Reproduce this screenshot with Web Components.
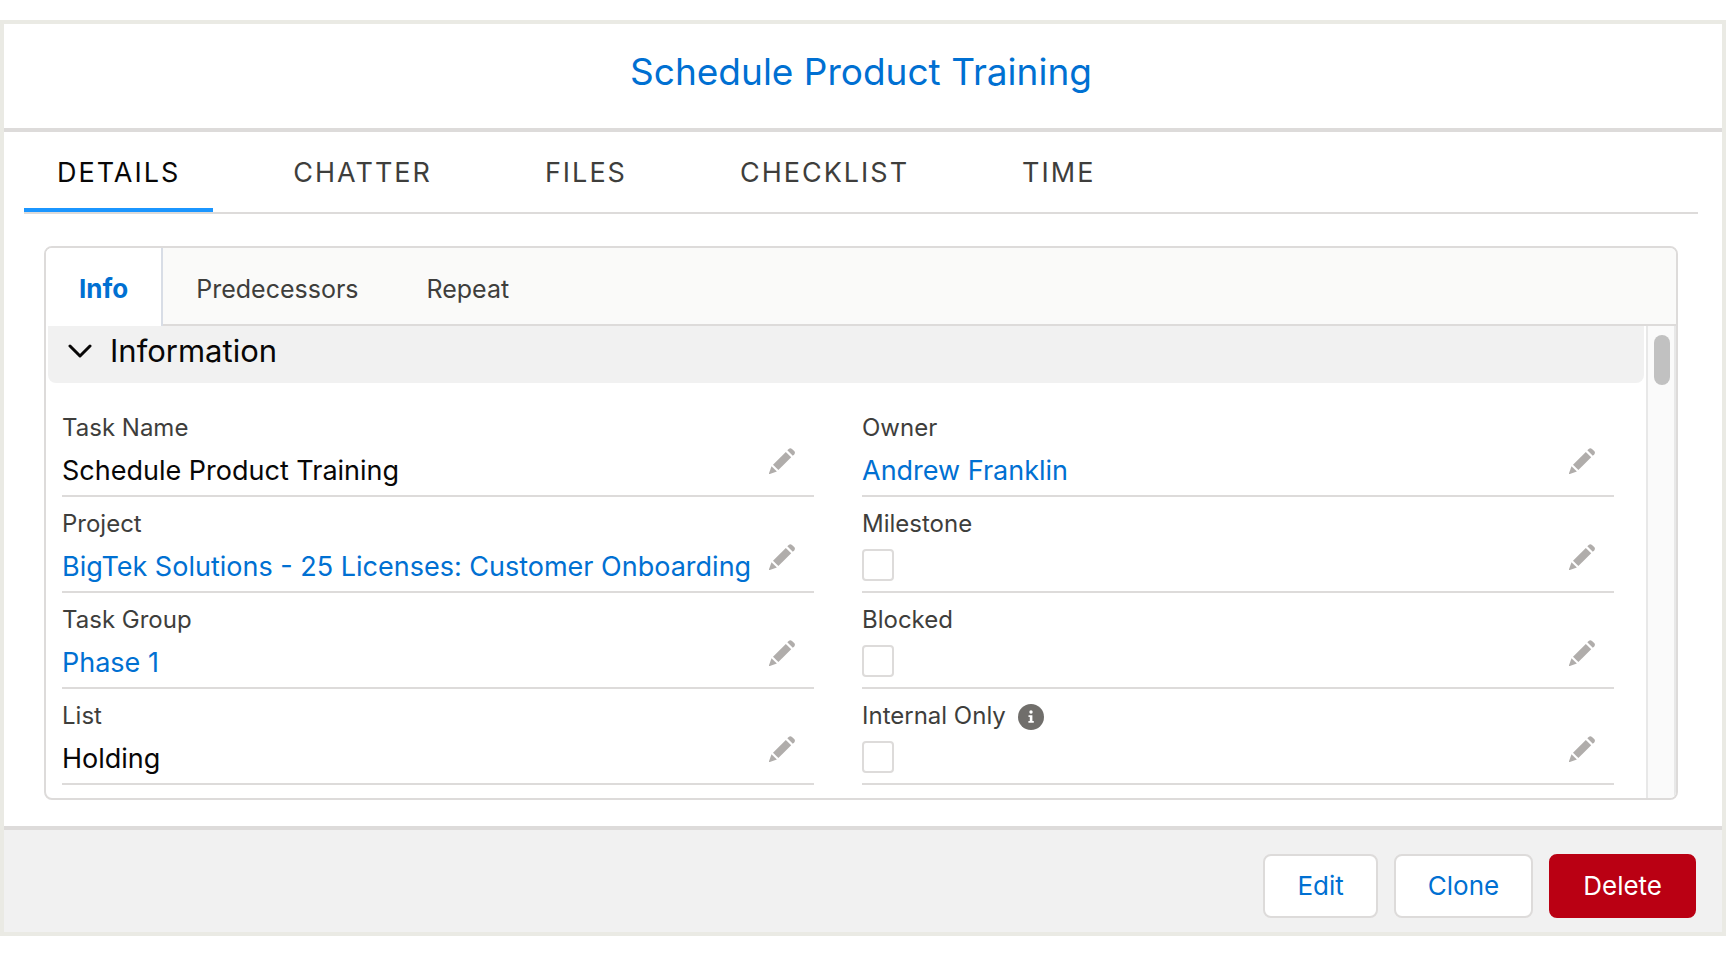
<!DOCTYPE html>
<html lang="en">
<head>
<meta charset="UTF-8">
<meta name="viewport" content="width=device-width, initial-scale=1.0">
<title>Schedule Product Training</title>
<style>
  :root {
    --border: #dddbda;
    --link: #0070d2;
    --text: #3e3e3c;
    --surface: #f1f1f1;
  }
  body {
    margin: 0;
    padding: 20px 0;
    background: #fff;
    color: #080707;
    font-family: Inter, "Liberation Sans", sans-serif;
  }
</style>
</head>
<body>

<task-dialog>
  <a slot="title" href="#">Schedule Product Training</a>

  <main-tabs tabs="Details,Chatter,Files,Checklist,Time"></main-tabs>

  <scoped-card tabs="Info,Predecessors,Repeat">
    <record-section heading="Information">
      <record-field label="Task Name">Schedule Product Training</record-field>
      <record-field label="Owner" href="#">Andrew Franklin</record-field>
      <record-field label="Project" href="#">BigTek Solutions - 25 Licenses: Customer Onboarding</record-field>
      <record-field label="Milestone" type="checkbox"></record-field>
      <record-field label="Task Group" href="#">Phase 1</record-field>
      <record-field label="Blocked" type="checkbox"></record-field>
      <record-field label="List">Holding</record-field>
      <record-field label="Internal Only" type="checkbox" help></record-field>
    </record-section>
  </scoped-card>

  <action-button slot="actions">Edit</action-button>
  <action-button slot="actions">Clone</action-button>
  <action-button slot="actions" variant="destructive">Delete</action-button>
</task-dialog>

<script>
class TaskDialog extends HTMLElement {
  constructor() {
    super();
    this.attachShadow({ mode: 'open' });
  }

  connectedCallback() {
    this.shadowRoot.innerHTML = `
      <style>
        :host {
          display: block;
          border: 4px solid #eaeae4;
          background: #fff;
        }

        h1 {
          margin: 0;
          padding: 24px 28px 32px 24px;
          border-bottom: 4px solid var(--border);
          font-size: 37px;
          line-height: 48px;
          font-weight: 400;
          text-align: center;
        }

        ::slotted(a) {
          color: var(--link);
          text-decoration: none;
        }

        .body {
          padding: 0 24px 26px 20px;
        }

        footer {
          display: flex;
          justify-content: flex-end;
          gap: 16px;
          padding: 24px 26px 14px;
          border-top: 4px solid var(--border);
          background: var(--surface);
        }
      </style>

      <h1><slot name="title"></slot></h1>
      <div class="body"><slot></slot></div>
      <footer><slot name="actions"></slot></footer>
    `;
  }
}

class MainTabs extends HTMLElement {
  constructor() {
    super();
    this.attachShadow({ mode: 'open' });
  }

  connectedCallback() {
    const tabs = this.getAttribute('tabs').split(',');

    this.shadowRoot.innerHTML = `
      <style>
        :host { display: block; }

        nav {
          display: flex;
          gap: 47px;
          border-bottom: 2px solid var(--border);
        }

        button {
          padding: 21px 33px 15px;
          border: 0;
          border-bottom: 4px solid transparent;
          background: none;
          color: var(--text);
          font: inherit;
          font-size: 27px;
          line-height: 40px;
          letter-spacing: 2px;
          text-transform: uppercase;
          cursor: pointer;
        }

        button[aria-selected="true"] {
          border-bottom-color: #1b96ff;
          color: #080707;
        }
      </style>

      <nav role="tablist">
        ${tabs.map((t, i) => `<button role="tab" aria-selected="${i === 0}">${t}</button>`).join('')}
      </nav>
    `;
  }
}

class ScopedCard extends HTMLElement {
  constructor() {
    super();
    this.attachShadow({ mode: 'open' });
  }

  connectedCallback() {
    const tabs = this.getAttribute('tabs').split(',');

    this.shadowRoot.innerHTML = `
      <style>
        :host {
          display: block;
          margin: 32px 20px 0;
          border: 2px solid var(--border);
          border-radius: 8px;
          overflow: hidden;
        }

        .tabs {
          display: flex;
          background: #fafaf9;
        }

        .tabs::after {
          content: "";
          flex: 1;
          border-bottom: 2px solid var(--border);
        }

        button {
          padding: 21px 35px 15px 33px;
          border: 0;
          border-bottom: 2px solid var(--border);
          background: none;
          color: var(--text);
          font: inherit;
          font-size: 25px;
          line-height: 40px;
          cursor: pointer;
        }

        button[aria-selected="true"] {
          padding: 21px 33px 17px;
          border-bottom: 0;
          border-right: 2px solid #d8dde6;
          background: #fff;
          color: var(--link);
          font-size: 26px;
          font-weight: 700;
        }

        .content {
          display: flex;
        }

        .panel {
          flex: 1;
          min-width: 0;
          padding: 0 2px 13px;
        }

        .scrollbar {
          box-sizing: border-box;
          width: 30px;
          padding: 9px 4px 0 6px;
          border: solid #e8e8e8;
          border-width: 0 2px;
          background: #fafafa;
        }

        .thumb {
          height: 50px;
          border-radius: 8px;
          background: #c1c1c1;
        }
      </style>

      <div class="tabs" role="tablist">
        ${tabs.map((t, i) => `<button role="tab" aria-selected="${i === 0}">${t}</button>`).join('')}
      </div>
      <div class="content">
        <div class="panel"><slot></slot></div>
        <div class="scrollbar"><div class="thumb"></div></div>
      </div>
    `;
  }
}

class RecordSection extends HTMLElement {
  constructor() {
    super();
    this.attachShadow({ mode: 'open' });
  }

  connectedCallback() {
    this.shadowRoot.innerHTML = `
      <style>
        :host { display: block; }

        h2 {
          margin: 0;
        }

        button {
          display: flex;
          align-items: center;
          gap: 18px;
          width: 100%;
          padding: 5px 20px 12px;
          border: 0;
          border-radius: 0 0 8px 8px;
          background: var(--surface);
          color: inherit;
          font: inherit;
          font-weight: 400;
          font-size: 31px;
          line-height: 40px;
          text-align: left;
          cursor: pointer;
        }

        .fields {
          display: grid;
          grid-template-columns: minmax(0, 1fr) minmax(0, 1fr);
          column-gap: 48px;
          padding: 18px 30px 0 14px;
        }
      </style>

      <h2>
        <button aria-expanded="true">
          <svg width="24" height="14" viewBox="0 0 24 14" fill="none" stroke="currentColor" stroke-width="3" stroke-linecap="round" stroke-linejoin="round" aria-hidden="true">
            <path d="M2 2l10 10L22 2"/>
          </svg>
          ${this.getAttribute('heading')}
        </button>
      </h2>
      <div class="fields"><slot></slot></div>
    `;
  }
}

class RecordField extends HTMLElement {
  constructor() {
    super();
    this.attachShadow({ mode: 'open' });
  }

  connectedCallback() {
    const label = this.getAttribute('label');
    const href = this.getAttribute('href');
    const isCheckbox = this.getAttribute('type') === 'checkbox';

    let value = '<slot></slot>';
    if (isCheckbox) value = '<input type="checkbox" id="value">';
    else if (href) value = `<a href="${href}"><slot></slot></a>`;

    const help = `
      <button class="help" aria-label="Help">
        <svg width="26" height="26" viewBox="0 0 26 26" aria-hidden="true">
          <circle cx="13" cy="13" r="13" fill="#706e6b"/>
          <circle cx="13" cy="8" r="1.7" fill="#fff"/>
          <path d="M10.5 11.2h3.9v5.8h1.4v1.8h-5.4V17h1.4v-4h-1.3z" fill="#fff"/>
        </svg>
      </button>
    `;

    this.shadowRoot.innerHTML = `
      <style>
        :host {
          display: flex;
          align-items: flex-end;
          padding: 9px 0 6px;
          border-bottom: 2px solid var(--border);
        }

        .main {
          flex: 1;
          min-width: 0;
          display: grid;
          row-gap: 7px;
        }

        .label {
          display: flex;
          align-items: center;
          gap: 12px;
          height: 36px;
          color: var(--text);
          font-size: 24px;
          line-height: 36px;
        }

        .value {
          height: 36px;
          font-size: 27px;
          line-height: 36px;
          white-space: nowrap;
        }

        a {
          color: var(--link);
          text-decoration: none;
        }

        input {
          appearance: none;
          display: block;
          width: 32px;
          height: 32px;
          margin: 0;
          border: 2px solid var(--border);
          border-radius: 4px;
          background: #fff;
        }

        button {
          border: 0;
          background: none;
          cursor: pointer;
        }

        svg { display: block; }

        .help { padding: 2px 0 0; }
        .edit { padding: 15px 19px 15px 9px; }
      </style>

      <div class="main">
        <div class="label">
          ${isCheckbox ? `<label for="value">${label}</label>` : `<span>${label}</span>`}
          ${this.hasAttribute('help') ? help : ''}
        </div>
        <div class="value">${value}</div>
      </div>
      <button class="edit" aria-label="Edit ${label}">
        <svg width="26" height="26" viewBox="0 0 26 26" fill="#b0adab" aria-hidden="true">
          <path d="M18.3 2.3l1.4-1.4q1.6-1.5 3.3 0l2.2 2.2q1.5 1.7 0 3.3L23.8 7.8z"/>
          <path d="M16.8 3.9l5.4 5.4L9.4 22.1 4 16.7z"/>
          <path d="M2.5 18.2l5.4 5.4L.8 26q-1 .2-.8-.8z"/>
        </svg>
      </button>
    `;
  }
}

class ActionButton extends HTMLElement {
  constructor() {
    super();
    this.attachShadow({ mode: 'open' });
  }

  connectedCallback() {
    this.shadowRoot.innerHTML = `
      <style>
        :host { display: block; }

        button {
          padding: 10px 32px;
          border: 2px solid var(--border);
          border-radius: 8px;
          background: #fff;
          color: var(--link);
          font: inherit;
          font-size: 26px;
          line-height: 40px;
          cursor: pointer;
        }

        :host([variant="destructive"]) button {
          border-color: #ba0013;
          background: #ba0013;
          color: #fff;
        }
      </style>

      <button><slot></slot></button>
    `;
  }
}

customElements.define('task-dialog', TaskDialog);
customElements.define('main-tabs', MainTabs);
customElements.define('scoped-card', ScopedCard);
customElements.define('record-section', RecordSection);
customElements.define('record-field', RecordField);
customElements.define('action-button', ActionButton);
</script>
</body>
</html>
